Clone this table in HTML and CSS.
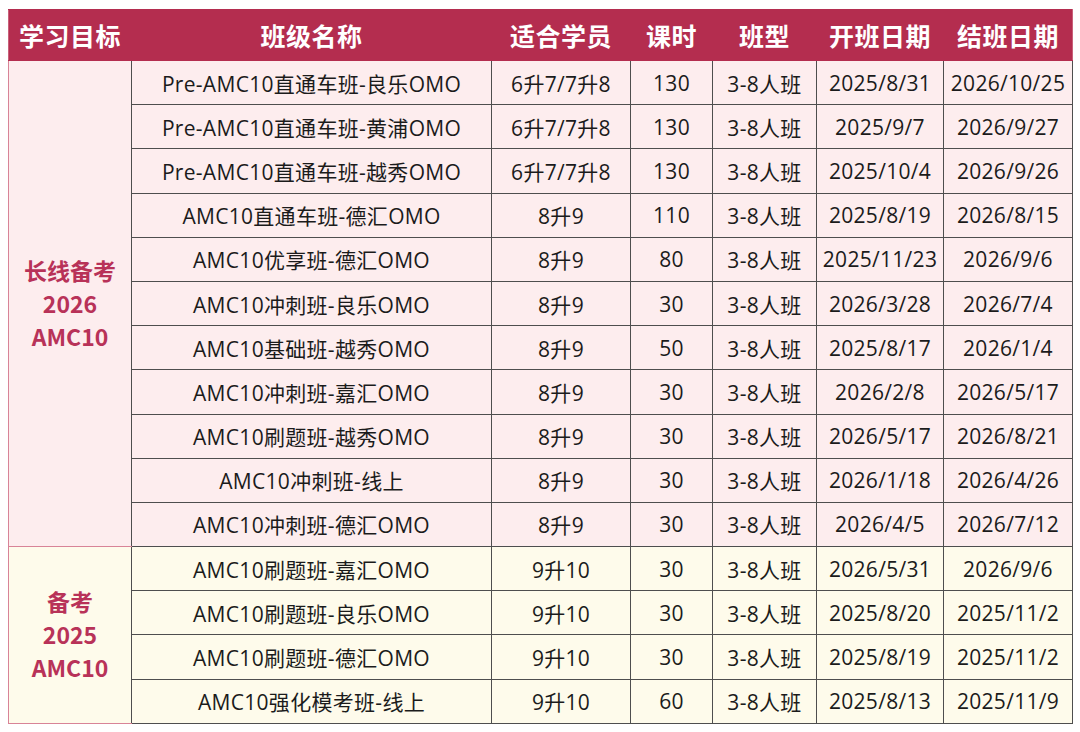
FILE: index.html
```html
<!DOCTYPE html>
<html lang="zh">
<head>
<meta charset="utf-8">
<link rel="stylesheet" href="styles.css">
</head>
<body>
<table class="sched">
  <colgroup>
    <col class="c1"><col class="c2"><col class="c3"><col class="c4"><col class="c5"><col class="c6"><col class="c7">
  </colgroup>
  <thead>
    <tr>
      <th class="h1">学习目标</th>
      <th class="h2">班级名称</th>
      <th class="h3">适合学员</th>
      <th class="hp">课时</th>
      <th class="hp">班型</th>
      <th class="hp">开班日期</th>
      <th class="hp">结班日期</th>
    </tr>
  </thead>
  <tbody class="g1">
    <tr><td class="goal" rowspan="11">长线备考<br>2026<br>AMC10</td><td>Pre-AMC10直通车班-良乐OMO</td><td>6升7/7升8</td><td>130</td><td>3-8人班</td><td>2025/8/31</td><td>2026/10/25</td></tr>
    <tr><td>Pre-AMC10直通车班-黄浦OMO</td><td>6升7/7升8</td><td>130</td><td>3-8人班</td><td>2025/9/7</td><td>2026/9/27</td></tr>
    <tr><td>Pre-AMC10直通车班-越秀OMO</td><td>6升7/7升8</td><td>130</td><td>3-8人班</td><td>2025/10/4</td><td>2026/9/26</td></tr>
    <tr><td>AMC10直通车班-德汇OMO</td><td>8升9</td><td>110</td><td>3-8人班</td><td>2025/8/19</td><td>2026/8/15</td></tr>
    <tr><td>AMC10优享班-德汇OMO</td><td>8升9</td><td>80</td><td>3-8人班</td><td>2025/11/23</td><td>2026/9/6</td></tr>
    <tr><td>AMC10冲刺班-良乐OMO</td><td>8升9</td><td>30</td><td>3-8人班</td><td>2026/3/28</td><td>2026/7/4</td></tr>
    <tr><td>AMC10基础班-越秀OMO</td><td>8升9</td><td>50</td><td>3-8人班</td><td>2025/8/17</td><td>2026/1/4</td></tr>
    <tr><td>AMC10冲刺班-嘉汇OMO</td><td>8升9</td><td>30</td><td>3-8人班</td><td>2026/2/8</td><td>2026/5/17</td></tr>
    <tr><td>AMC10刷题班-越秀OMO</td><td>8升9</td><td>30</td><td>3-8人班</td><td>2026/5/17</td><td>2026/8/21</td></tr>
    <tr><td>AMC10冲刺班-线上</td><td>8升9</td><td>30</td><td>3-8人班</td><td>2026/1/18</td><td>2026/4/26</td></tr>
    <tr><td>AMC10冲刺班-德汇OMO</td><td>8升9</td><td>30</td><td>3-8人班</td><td>2026/4/5</td><td>2026/7/12</td></tr>
  </tbody>
  <tbody class="g2">
    <tr><td class="goal" rowspan="4">备考<br>2025<br>AMC10</td><td>AMC10刷题班-嘉汇OMO</td><td>9升10</td><td>30</td><td>3-8人班</td><td>2026/5/31</td><td>2026/9/6</td></tr>
    <tr><td>AMC10刷题班-良乐OMO</td><td>9升10</td><td>30</td><td>3-8人班</td><td>2025/8/20</td><td>2025/11/2</td></tr>
    <tr><td>AMC10刷题班-德汇OMO</td><td>9升10</td><td>30</td><td>3-8人班</td><td>2025/8/19</td><td>2025/11/2</td></tr>
    <tr><td>AMC10强化模考班-线上</td><td>9升10</td><td>60</td><td>3-8人班</td><td>2025/8/13</td><td>2025/11/9</td></tr>
  </tbody>
</table>
</body>
</html>
```

FILE: styles.css
```css
html, body {
  margin: 0;
  padding: 0;
  background: #ffffff;
}

body {
  padding: 9px 0 0 8px;
  font-family: "Open Sans", "Noto Sans CJK SC", sans-serif;
}

.sched {
  border-collapse: collapse;
  table-layout: fixed;
  width: 1064px;
}

.c1 { width: 123px; }
.c2 { width: 360px; }
.c3 { width: 139px; }
.c4 { width: 82px; }
.c5 { width: 104px; }
.c6 { width: 127px; }
.c7 { width: 129px; }

.sched th {
  height: 51px;
  box-sizing: border-box;
  padding: 0;
  background: #b42d4f;
  color: #ffffff;
  font-family: "Noto Sans CJK SC", sans-serif;
  font-weight: 700;
  font-size: 25px;
  line-height: 30px;
  letter-spacing: 0.5px;
  text-align: center;
  vertical-align: middle;
  border: 1px solid #b42d4f;
}

.sched th.h1 { border-left: 1px solid #c9607a; }
.sched th.h3 { border-left: 1px solid #4a2430; }
.sched th.hp { border-left: 1px solid #e39bac; }
.sched th:last-child { border-right: 1px solid #c9607a; }

.sched td {
  height: 44.2px;
  padding: 0;
  box-sizing: border-box;
  font-size: 21px;
  letter-spacing: 0.3px;
  color: #1b1b1b;
  text-align: center;
  vertical-align: middle;
  border: 1px solid #4e4e4e;
  white-space: nowrap;
}

.g1 td { background: #fdedee; }
.g2 td { background: #fefbeb; }

.sched td.goal {
  font-family: "Noto Sans CJK SC", sans-serif;
  font-weight: 700;
  font-size: 23px;
  letter-spacing: 0;
  line-height: 33px;
  color: #b83258;
  border: 1px solid #d88397;
  border-right: 1px solid #4e4e4e;
}

.g1 tr:last-child td {
  border-bottom: 1px solid #4e4e4e;
}
.g1 tr:first-child td.goal { border-bottom: 1px solid #d88397; }
```
